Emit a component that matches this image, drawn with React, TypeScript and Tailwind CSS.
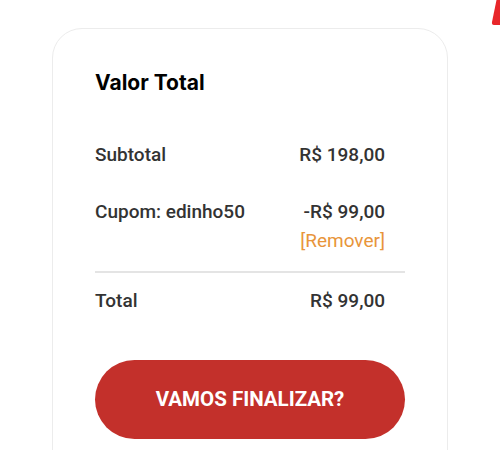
import React from 'react';

const Row: React.FC<{ label: string; value: string }> = ({ label, value }) => (
  <div className="flex items-center justify-between pr-5 text-[19px] leading-[24px] font-medium text-[#333333]">
    <span>{label}</span>
    <span>{value}</span>
  </div>
);

const App: React.FC = () => {
  return (
    <div className="relative h-[450px] w-[500px] overflow-hidden bg-white" style={{ fontFamily: 'Roboto, "Liberation Sans", sans-serif' }}>
      {/* red corner shape */}
      <svg className="absolute right-0 top-0" width="9" height="27" viewBox="0 0 9 27">
        <path d="M5.5 0 L9 0 L9 25 L3 25 Q0.5 25 1 22 Z" fill="#e8262a" />
      </svg>

      <div className="pt-[28px] pl-[52px]">
        <div className="h-[460px] w-[396px] rounded-[30px] border border-[#ececec] bg-white px-[42px] pt-[40px]">
          <h2
            className="text-[21px] leading-[28px] font-bold text-black"
            style={{ fontFamily: 'Inter, "DejaVu Sans", sans-serif' }}
          >
            Valor Total
          </h2>

          <div className="mt-[46px]">
            <Row label="Subtotal" value="R$ 198,00" />
          </div>

          <div className="mt-[33px]">
            <Row label="Cupom: edinho50" value="-R$ 99,00" />
            <div className="mt-[5px] flex justify-end pr-5 text-[19px] leading-[24px] text-[#e8953a]">
              [Remover]
            </div>
          </div>

          <div className="mt-[18px] h-[2px] bg-[#e4e4e4]" />

          <div className="mt-[16px]">
            <Row label="Total" value="R$ 99,00" />
          </div>

          <button className="mt-[47px] flex h-[79px] w-full items-center justify-center rounded-full bg-[#c3302b] text-[20.5px] font-bold text-white">
            VAMOS FINALIZAR?
          </button>
        </div>
      </div>
    </div>
  );
};

export default App;
